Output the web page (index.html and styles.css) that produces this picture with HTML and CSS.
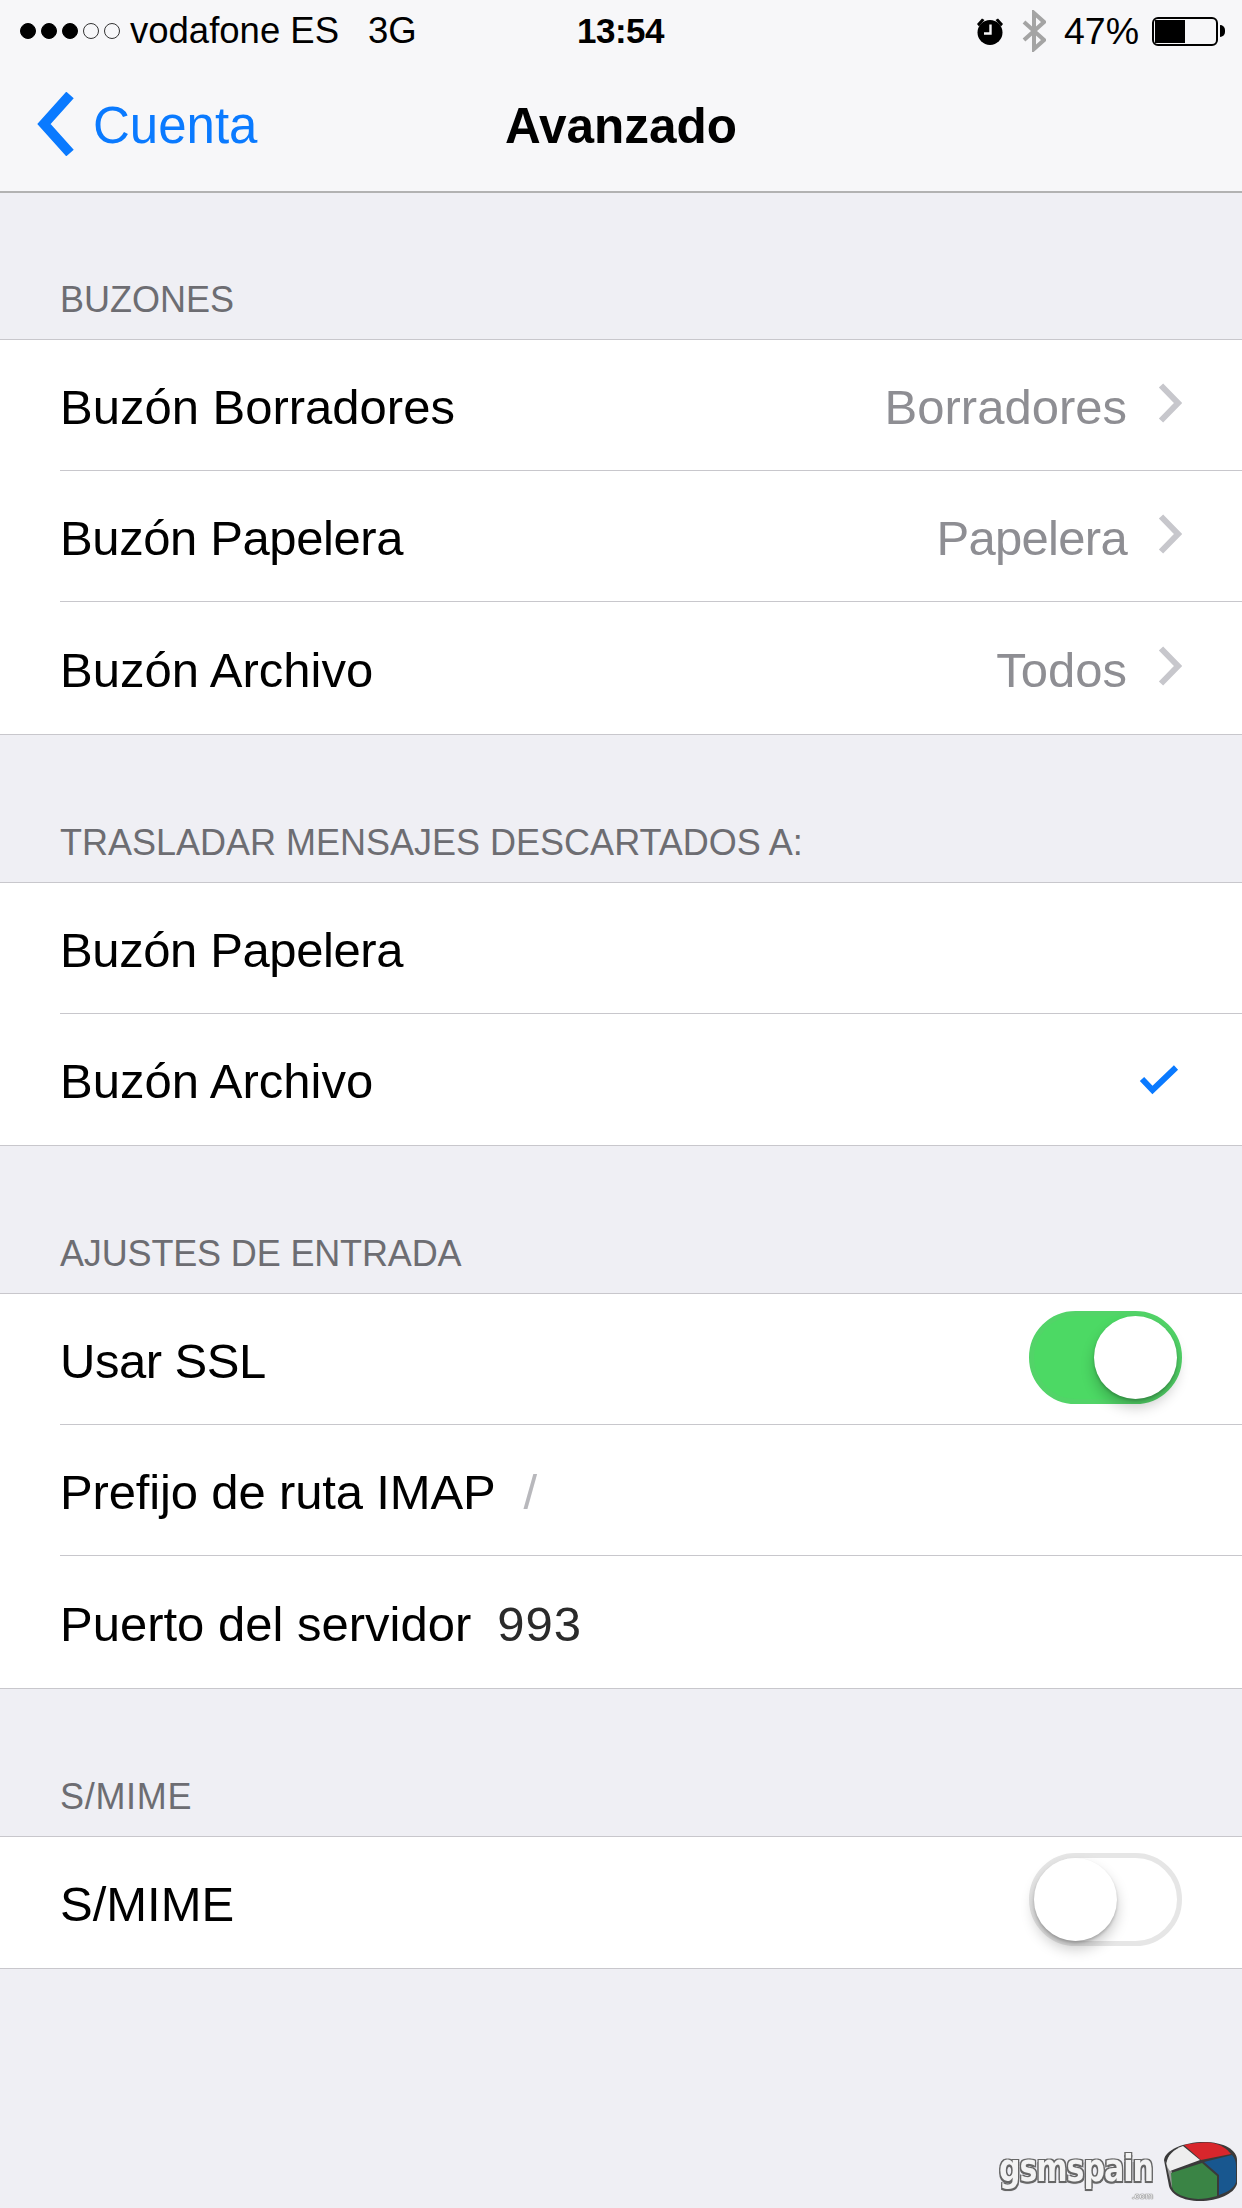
FILE: index.html
```html
<!DOCTYPE html>
<html lang="es">
<head>
<meta charset="utf-8">
<title>Avanzado</title>
<link rel="stylesheet" href="styles.css">
</head>
<body>
<div class="page">
  <header class="topbar">
    <div class="status">
      <div class="status-left">
        <span class="dots"><i class="dot on"></i><i class="dot on"></i><i class="dot on"></i><i class="dot"></i><i class="dot"></i></span>
        <span class="carrier">vodafone ES</span>
        <span class="net">3G</span>
      </div>
      <div class="time">13:54</div>
      <div class="status-right">
        <svg class="alarm" width="28" height="28" viewBox="0 0 28 28"><path d="M1 7 L6 1.500 L8.500 3 L3 9.500Z M27 7 L22 1.500 L19.500 3 L25 9.500Z" fill="#000"/><circle cx="14" cy="15.500" r="12.500" fill="#000"/><path d="M14.500 7.500v9H8" fill="none" stroke="#f6f6f8" stroke-width="2.400"/></svg>
        <svg class="bt" width="24" height="42" viewBox="0 0 24 42"><path d="M2 12 L22 30 L12 39 V3 L22 12 L2 30" fill="none" stroke="#a4a4a4" stroke-width="4"/></svg>
        <span class="pct">47%</span>
        <span class="battery"><span class="battery-fill"></span></span>
        <span class="battery-tip"></span>
      </div>
    </div>
    <nav class="navbar">
      <div class="back">
        <svg class="back-icon" width="38" height="64" viewBox="0 0 38 64"><path d="M33 3 L7 32 L33 61" fill="none" stroke="#0a7aff" stroke-width="10"/></svg>
        <span class="back-label">Cuenta</span>
      </div>
      <h1 class="title">Avanzado</h1>
      <div></div>
    </nav>
  </header>

  <section>
    <h2 class="sec-head">BUZONES</h2>
    <div class="group">
      <div class="row"><div class="row-in"><span class="label">Buzón Borradores</span><span class="value">Borradores</span><svg class="chev" width="24" height="40" viewBox="0 0 24 40"><path d="M3 2.500 L20 20 L3 37.500" fill="none" stroke="#c7c7cc" stroke-width="6"/></svg></div></div>
      <div class="row"><div class="row-in"><span class="label tight">Buzón Papelera</span><span class="value tighter">Papelera</span><svg class="chev" width="24" height="40" viewBox="0 0 24 40"><path d="M3 2.500 L20 20 L3 37.500" fill="none" stroke="#c7c7cc" stroke-width="6"/></svg></div></div>
      <div class="row"><div class="row-in"><span class="label">Buzón Archivo</span><span class="value">Todos</span><svg class="chev" width="24" height="40" viewBox="0 0 24 40"><path d="M3 2.500 L20 20 L3 37.500" fill="none" stroke="#c7c7cc" stroke-width="6"/></svg></div></div>
    </div>
  </section>

  <section>
    <h2 class="sec-head">TRASLADAR MENSAJES DESCARTADOS A:</h2>
    <div class="group">
      <div class="row"><div class="row-in"><span class="label tight">Buzón Papelera</span></div></div>
      <div class="row"><div class="row-in"><span class="label">Buzón Archivo</span><svg class="check" width="40" height="32" viewBox="0 0 40 32"><path d="M3 15 L13.500 26 L37 3.500" fill="none" stroke="#0a7aff" stroke-width="6"/></svg></div></div>
    </div>
  </section>

  <section>
    <h2 class="sec-head head-narrow">AJUSTES DE ENTRADA</h2>
    <div class="group">
      <div class="row"><div class="row-in"><span class="label tight-more">Usar SSL</span><span class="switch on"><span class="knob"></span></span></div></div>
      <div class="row"><div class="row-in"><span class="label tight-less">Prefijo de ruta IMAP</span><span class="field-val">/</span></div></div>
      <div class="row"><div class="row-in"><span class="label">Puerto del servidor</span><span class="field-num">993</span></div></div>
    </div>
  </section>

  <section>
    <h2 class="sec-head head-wide">S/MIME</h2>
    <div class="group">
      <div class="row"><div class="row-in"><span class="label">S/MIME</span><span class="switch off"><span class="knob"></span></span></div></div>
    </div>
  </section>

  <footer class="footer">
    <div class="brand">
      <div class="brand-text"><span class="brand-name">gsmspain</span><span class="brand-com">.com</span></div>
      <svg class="pie" width="74" height="60" viewBox="0 0 74 60">
        <path d="M0 18 C1 8 20 0 40 0 C60 0 73 8 73 18 V42 C70 52 54 59 36 59 C18 59 7 52 5 44Z" fill="#3a3a3a"/>
        <path d="M1.500 19 L8 46 L8 30Z" fill="#9a9a9a"/>
        <path d="M7 31 L38 21 L53 34 V54 C46 56 40 57 34 57 C20 56 10 52 8 45Z" fill="#3a8445"/>
        <path d="M40 20 L68 13 C71 16 72 20 72 24 V40 C70 46 64 50 55 53 V33Z" fill="#18578f"/>
        <path d="M2.500 21 C3 14 10 7 19 4 L36 18 L6 29 C4 27 3 24 2.500 21Z" fill="#eeeeee"/>
        <path d="M20 3 C30 1 40 0 48 1 C56 2 63 7 67 12 L37 18Z" fill="#d8262c"/>
      </svg>
    </div>
  </footer>
</div>
</body>
</html>
```
FILE: styles.css
```css
* { box-sizing: border-box; margin: 0; padding: 0; }
html, body { width: 1242px; height: 2208px; overflow: hidden; }
body { font-family: "Liberation Sans", Arial, sans-serif; background: #efeff4; color: #000; }
.page { width: 1242px; height: 2208px; display: flex; flex-direction: column; }

.topbar { height: 193px; background: #f7f7f9; border-bottom: 2px solid #b2b2b2; }
.status { height: 62px; display: grid; grid-template-columns: 1fr auto 1fr; align-items: center; font-size: 36.500px; padding: 0 17px 0 20px; }
.status-left { display: flex; align-items: center; }
.dots { display: flex; gap: 5px; margin-right: 10px; }
.dot { width: 16px; height: 16px; border-radius: 50%; border: 1.500px solid #333; }
.dot.on { background: #000; border-color: #000; }
.carrier { margin-right: 29px; }
.time { font-weight: bold; font-size: 35px; letter-spacing: -0.500px; margin-left: -4px; }
.status-right { display: flex; align-items: center; justify-content: flex-end; }
.alarm { margin-right: 18px; }
.bt { margin-right: 18px; }
.pct { font-size: 37.500px; margin-right: 13px; }
.battery { width: 66px; height: 29px; border: 2px solid #000; border-radius: 6px; padding: 1px; display: flex; }
.battery-fill { width: 30px; background: #000; }
.battery-tip { width: 5px; height: 12px; background: #000; border-radius: 0 6px 6px 0; margin-left: 2px; }

.navbar { height: 129px; display: grid; grid-template-columns: 1fr auto 1fr; align-items: center; padding-bottom: 3px; }
.back { display: flex; align-items: center; padding-left: 37px; gap: 18px; color: #0a7aff; font-size: 51px; }
.back-icon { margin-top: -2px; }
.title { font-size: 49.500px; font-weight: bold; }

.sec-head { height: 147px; display: flex; align-items: flex-end; padding: 0 0 18px 60px; font-size: 36px; font-weight: normal; color: #6d6d72; }
section:first-of-type .sec-head { height: 146px; }
.head-narrow { letter-spacing: -0.150px; }
.head-wide { letter-spacing: 0.700px; }
.group { background: #fff; border-top: 1px solid #c8c7cc; border-bottom: 1px solid #c8c7cc; }
.row { height: 131.200px; padding-left: 60px; }
.row-in { height: 100%; display: flex; align-items: center; padding-right: 60px; border-bottom: 1px solid #c8c7cc; font-size: 49px; }
.row:last-child .row-in { border-bottom: 0; }
.label { white-space: pre; margin-top: 4px; }
.tight { letter-spacing: -0.400px; }
.tight-more { letter-spacing: -0.500px; }
.tight-less { letter-spacing: -0.150px; }
.value { margin-left: auto; color: #8e8e93; margin-right: 31px; margin-top: 4px; }
.tighter { letter-spacing: -0.700px; }
.chev { margin-bottom: 4px; }
.check { margin-left: auto; margin-right: 3px; margin-top: 2px; }
.field-val { color: #b8b8bc; margin-left: 28px; margin-top: 4px; }
.field-num { margin-left: 26px; color: #2a2a2a; margin-top: 4px; letter-spacing: 1px; }

.switch { margin-left: auto; width: 153px; height: 93px; border-radius: 47px; border: 5px solid #e6e6e6; background: #fff; display: flex; margin-bottom: 4px; }
.switch.off { margin-bottom: 5px; }
.switch.on { background: #4cd964; border-color: #52d468; justify-content: flex-end; }
.knob { width: 83px; height: 83px; border-radius: 50%; background: #fff; box-shadow: 0 8px 14px rgba(0,0,0,.22), 0 2px 3px rgba(0,0,0,.2); }

.footer { flex: 1; display: flex; justify-content: flex-end; align-items: flex-end; padding: 0 4px 6px 0; }
.brand { display: flex; align-items: flex-end; gap: 11px; }
.brand-text { display: flex; flex-direction: column; align-items: flex-end; margin-bottom: 1px; filter: blur(.5px); }
.brand-name { font-family: "DejaVu Sans Condensed", "DejaVu Sans", sans-serif; font-stretch: condensed; font-weight: bold; font-size: 38px; line-height: 32px; letter-spacing: -1.200px; color: #f3f3f3; text-shadow: -1.500px -1.500px 0 #666, 1.500px -1.500px 0 #666, -1.500px 1.500px 0 #666, 1.500px 1.500px 0 #666, 0 2px 1px #777; transform: scaleX(.88); transform-origin: right center; }
.brand-com { font-size: 9px; line-height: 9px; margin-top: 8px; font-weight: bold; color: #eee; text-shadow: 0 0 1px #555, 0 0 1px #555; }
.pie { filter: blur(.4px); }
```
